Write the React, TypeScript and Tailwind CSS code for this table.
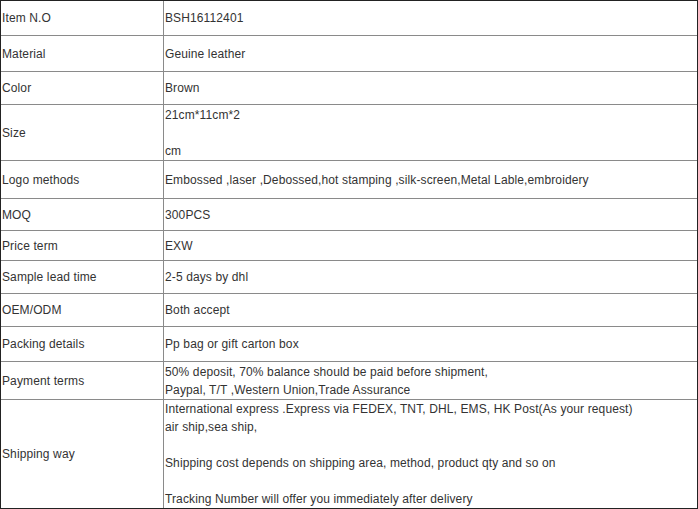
import React from "react";

const rows: { label: string; value: string[]; h: string }[] = [
  { label: "Item N.O", value: ["BSH16112401"], h: "h-[34px]" },
  { label: "Material", value: ["Geuine leather"], h: "h-[36px]" },
  { label: "Color", value: ["Brown"], h: "h-[33px]" },
  { label: "Size", value: ["21cm*11cm*2", "", "cm"], h: "h-[56px]" },
  { label: "Logo methods", value: ["Embossed ,laser ,Debossed,hot stamping ,silk-screen,Metal Lable,embroidery"], h: "h-[38px]" },
  { label: "MOQ", value: ["300PCS"], h: "h-[32px]" },
  { label: "Price term", value: ["EXW"], h: "h-[30px]" },
  { label: "Sample lead time", value: ["2-5 days by dhl"], h: "h-[33px]" },
  { label: "OEM/ODM", value: ["Both accept"], h: "h-[33px]" },
  { label: "Packing details", value: ["Pp bag or gift carton box"], h: "h-[35px]" },
  { label: "Payment terms", value: ["50% deposit, 70% balance should be paid before shipment,", "Paypal, T/T ,Western Union,Trade Assurance"], h: "h-[38px]" },
  {
    label: "Shipping way",
    value: [
      "International express .Express via FEDEX, TNT, DHL, EMS, HK Post(As your request)",
      "air ship,sea ship,",
      "",
      "Shipping cost depends on shipping area, method, product qty and so on",
      "",
      "Tracking Number will offer you immediately after delivery",
    ],
    h: "h-[109px]",
  },
];

export default function App() {
  return (
    <div className="w-[698px] h-[509px] bg-white text-[#333] text-[12px] leading-[18px] tracking-[0.12px]" style={{ fontFamily: '"Liberation Sans", Arial, sans-serif' }}>
      <div className="w-[698px] h-[509px] border border-[#222] flex flex-col">
        {rows.map((r, i) => (
          <div key={i} className={`${r.h} flex ${i > 0 ? "border-t border-[#8a8a8a]" : ""}`}>
            <div className="w-[163px] border-r border-[#8a8a8a] flex items-center pl-px">{r.label}</div>
            <div className="flex-1 flex flex-col justify-center pl-px">
              {r.value.map((v, j) => (
                <div key={j} className="h-[18px] whitespace-nowrap">{v}</div>
              ))}
            </div>
          </div>
        ))}
      </div>
    </div>
  );
}
